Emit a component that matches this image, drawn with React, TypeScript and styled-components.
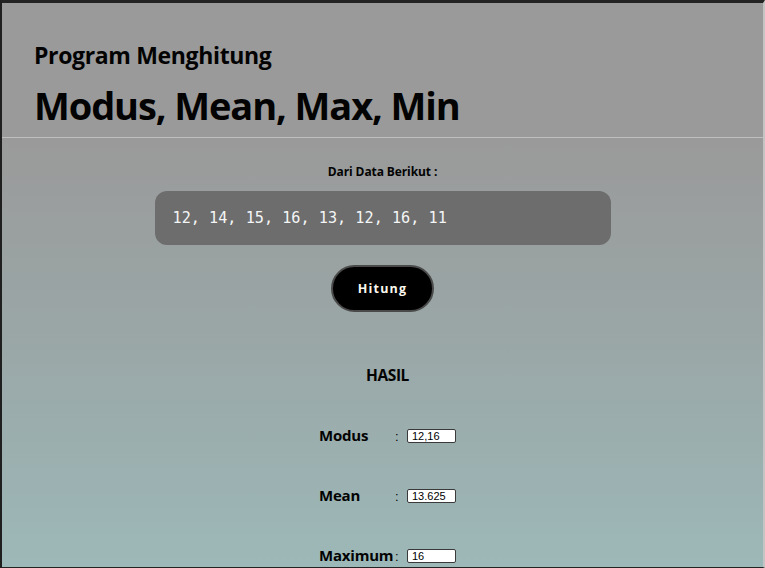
import React, { useState } from 'react';
import styled, { createGlobalStyle } from 'styled-components';

const GlobalStyle = createGlobalStyle`
  html, body {
    margin: 0;
    padding: 0;
    background: #222;
  }
  * {
    box-sizing: border-box;
  }
`;

const Frame = styled.div`
  width: 765px;
  height: 568px;
  overflow: hidden;
  border-top: 3px solid #232323;
  border-left: 2px solid #1f1f1f;
  border-right: 2px solid #c4c4c4;
  border-bottom: 1px solid #232323;
  display: flex;
  flex-direction: column;
  font-family: 'Open Sans', 'Noto Sans', sans-serif;
  color: #030303;
`;

const Header = styled.header`
  background: #9a9a9a;
  padding: 36px 32px 6px;
  border-bottom: 1px solid #bfbfbf;
  display: flex;
  flex-direction: column;
  gap: 8px;
`;

const SubTitle = styled.h2`
  margin: 0;
  font-size: 23px;
  line-height: 32px;
  font-weight: 700;
  letter-spacing: -0.35px;
`;

const Title = styled.h1`
  margin: 0;
  font-size: 38px;
  line-height: 52px;
  font-weight: 700;
  letter-spacing: -1.1px;
`;

const Main = styled.main`
  flex: 1;
  background: linear-gradient(180deg, #9a9a9a 0%, #9aa6a6 45%, #9db8b8 100%);
  display: flex;
  flex-direction: column;
  align-items: center;
  padding-top: 26px;
`;

const DataLabel = styled.div`
  font-size: 12px;
  line-height: 16px;
  font-weight: 700;
  letter-spacing: -0.1px;
`;

const DataBox = styled.div`
  margin-top: 11px;
  width: 456px;
  height: 54px;
  border-radius: 12px;
  background: #6d6d6d;
  display: flex;
  align-items: center;
  padding-left: 18px;
  font-family: 'DejaVu Sans Mono', 'Liberation Mono', monospace;
  font-size: 15.2px;
  color: #f4f6f6;
`;

const CountButton = styled.button`
  margin-top: 20px;
  width: 103px;
  height: 47px;
  border-radius: 24px;
  background: #000;
  border: 2px solid #4a4a4a;
  color: #fbf7ee;
  font-family: 'Open Sans', 'Noto Sans', sans-serif;
  font-size: 12.5px;
  font-weight: 700;
  letter-spacing: 1.2px;
  cursor: pointer;
`;

const Results = styled.section`
  margin-top: 53px;
  padding-left: 10px;
  display: flex;
  flex-direction: column;
  align-items: center;
`;

const ResultTitle = styled.div`
  font-size: 15.5px;
  line-height: 20px;
  font-weight: 700;
  letter-spacing: -0.4px;
  margin-bottom: 41px;
`;

const Rows = styled.div`
  display: flex;
  flex-direction: column;
  gap: 40px;
`;

const Row = styled.div`
  display: grid;
  grid-template-columns: 76px 12px 49px;
  align-items: center;
  height: 20px;
`;

const RowLabel = styled.span`
  font-size: 15px;
  font-weight: 700;
  letter-spacing: -0.2px;
  position: relative;
  top: -1px;
`;

const Colon = styled.span`
  font-size: 13px;
  font-family: 'Liberation Sans', Arial, sans-serif;
`;

const ValueInput = styled.input`
  width: 49px;
  height: 14px;
  padding: 0 4px;
  margin: 0;
  border: 1px solid #3a3a3a;
  border-radius: 2px;
  background: #fff;
  font-family: 'Liberation Sans', Arial, sans-serif;
  font-size: 11px;
  color: #000;
  outline: none;
`;

const data = [12, 14, 15, 16, 13, 12, 16, 11];

export default function App() {
  const [result] = useState({ modus: '12,16', mean: '13.625', max: '16' });

  const rows = [
    { label: 'Modus', value: result.modus },
    { label: 'Mean', value: result.mean },
    { label: 'Maximum', value: result.max },
  ];

  return (
    <>
      <GlobalStyle />
      <Frame>
        <Header>
          <SubTitle>Program Menghitung</SubTitle>
          <Title>Modus, Mean, Max, Min</Title>
        </Header>
        <Main>
          <DataLabel>Dari Data Berikut :</DataLabel>
          <DataBox>{data.join(', ')}</DataBox>
          <CountButton>Hitung</CountButton>
          <Results>
            <ResultTitle>HASIL</ResultTitle>
            <Rows>
              {rows.map((r) => (
                <Row key={r.label}>
                  <RowLabel>{r.label}</RowLabel>
                  <Colon>:</Colon>
                  <ValueInput readOnly value={r.value} />
                </Row>
              ))}
            </Rows>
          </Results>
        </Main>
      </Frame>
    </>
  );
}
